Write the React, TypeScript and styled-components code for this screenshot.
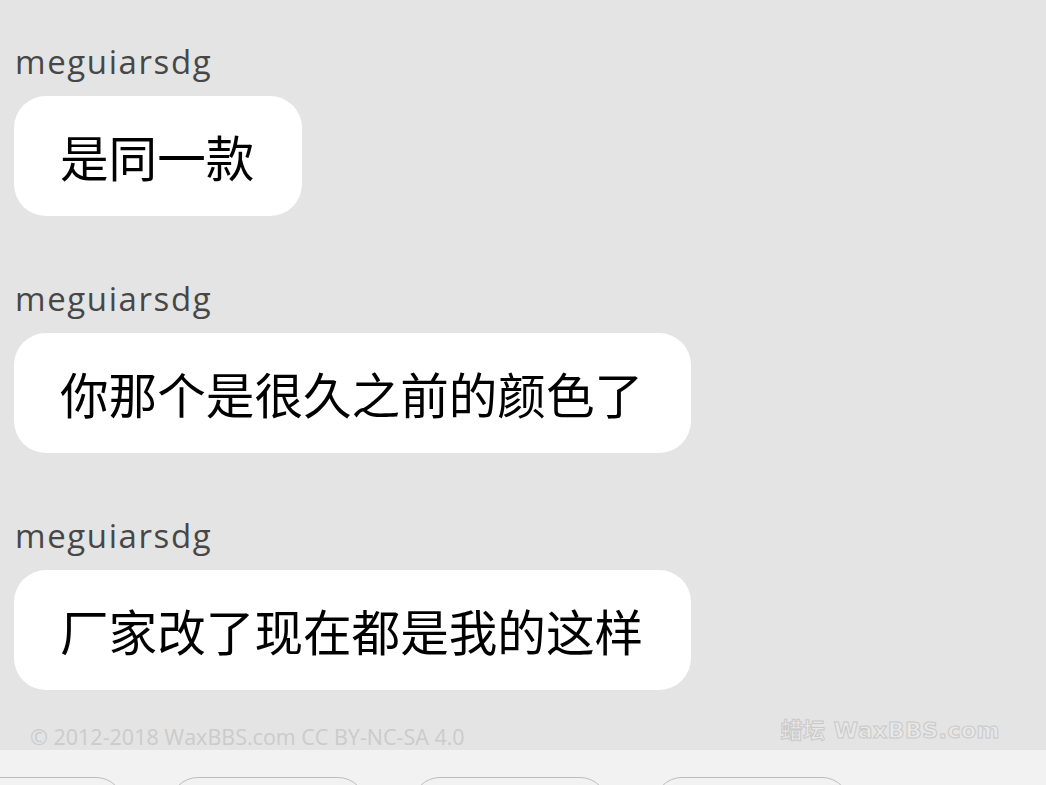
import styled, { createGlobalStyle } from "styled-components";

const GlobalStyle = createGlobalStyle`
    *, *::before, *::after {
        box-sizing: border-box;
    }
    html, body {
        margin: 0;
        padding: 0;
        background: #e4e4e4;
        overflow: hidden;
    }
`;

const Page = styled.div`
    width: 1046px;
    height: 785px;
    display: flex;
    flex-direction: column;
    overflow: hidden;
    background: #e4e4e4;
`;

const MessageList = styled.ul`
    list-style: none;
    margin: 0;
    padding: 42px 0 0 14px;
    flex: 1;
`;

const Message = styled.li`
    display: flex;
    flex-direction: column;
    align-items: flex-start;
    margin-bottom: 63px;
    &:last-child {
        margin-bottom: 0;
    }
`;

const Author = styled.div`
    font-family: "Open Sans", "Noto Sans", sans-serif;
    font-size: 33px;
    line-height: 40px;
    letter-spacing: 1.6px;
    color: #474747;
    padding-left: 1px;
`;

const Bubble = styled.div`
    margin-top: 14px;
    background: #fff;
    border-radius: 32px;
    padding: 26px 48px 26px 46px;
    font-family: "Noto Sans CJK SC", "Noto Sans", sans-serif;
    font-size: 48.6px;
    line-height: 68px;
    color: #000;
`;

const Credits = styled.div`
    display: flex;
    align-items: flex-end;
    justify-content: space-between;
    height: 60px;
    padding: 0 46px 0 30px;
`;

const Copyright = styled.span`
    font-family: "Open Sans", "Noto Sans", sans-serif;
    font-size: 21.5px;
    line-height: 26px;
    color: #cbcbcb;
`;

const Watermark = styled.span`
    font-family: "DejaVu Sans", "Noto Sans CJK SC", sans-serif;
    font-weight: bold;
    font-size: 22px;
    line-height: 38px;
    letter-spacing: 0.5px;
    color: #e8e8e8;
    -webkit-text-stroke: 1px #c9c9c9;
`;

const Toolbar = styled.div`
    height: 35px;
    background: #f2f2f2;
    overflow: hidden;
    display: flex;
    gap: 46px;
    padding-top: 27px;
    margin-left: -72px;
`;

const ToolButton = styled.button`
    flex: none;
    width: 196px;
    height: 64px;
    border: 1.5px solid #bdbdbd;
    border-radius: 28px;
    background: #f2f2f2;
`;

const messages = [
    { id: 1, author: "meguiarsdg", text: "是同一款" },
    { id: 2, author: "meguiarsdg", text: "你那个是很久之前的颜色了" },
    { id: 3, author: "meguiarsdg", text: "厂家改了现在都是我的这样" },
];

function App() {
    return (
        <Page>
            <GlobalStyle />
            <MessageList>
                {messages.map((m) => (
                    <Message key={m.id}>
                        <Author>{m.author}</Author>
                        <Bubble>{m.text}</Bubble>
                    </Message>
                ))}
            </MessageList>
            <Credits>
                <Copyright>© 2012-2018 WaxBBS.com CC BY-NC-SA 4.0</Copyright>
                <Watermark>蜡坛 WaxBBS.com</Watermark>
            </Credits>
            <Toolbar>
                {[0, 1, 2, 3].map((i) => (
                    <ToolButton key={i} />
                ))}
            </Toolbar>
        </Page>
    );
}

export default App;
